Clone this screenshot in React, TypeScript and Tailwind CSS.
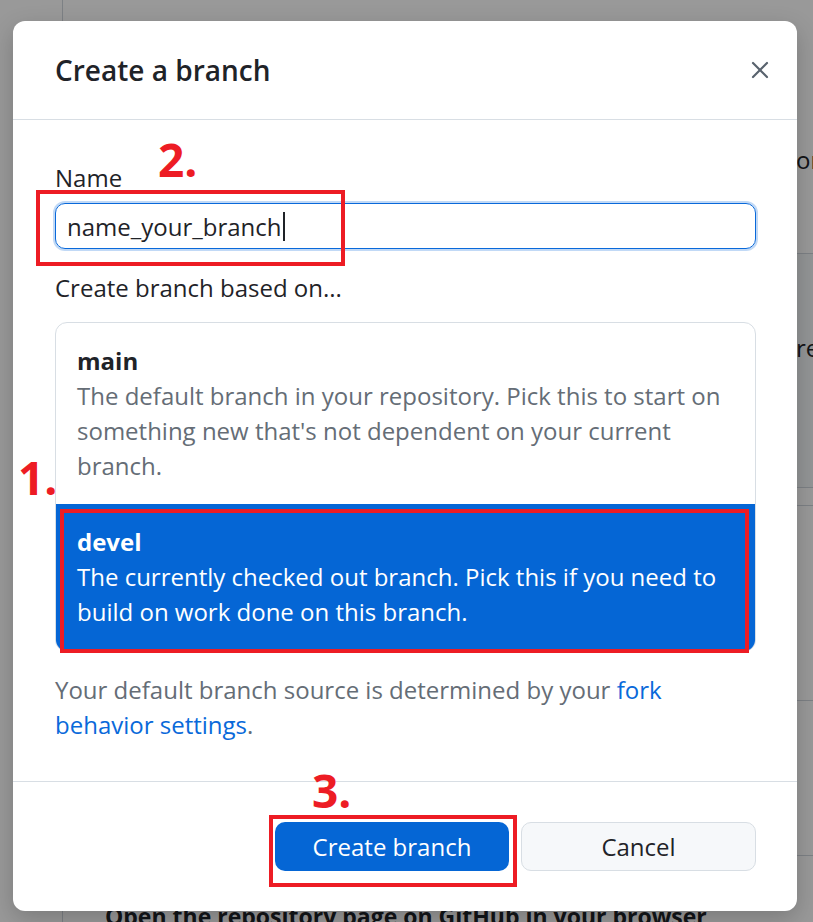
import React from 'react';

/**
 * "Create a branch" dialog over a dimmed repository page,
 * with the red step annotations (1. 2. 3.) drawn on top.
 */

const CloseIcon: React.FC = () => (
  <svg width="18" height="18" viewBox="0 0 18 18" fill="none" stroke="#59636e" strokeWidth="2.2" strokeLinecap="round">
    <line x1="2" y1="2" x2="16" y2="16" />
    <line x1="16" y1="2" x2="2" y2="16" />
  </svg>
);

// The page that sits behind the overlay (only its edges show)
const BackgroundPage: React.FC = () => (
  <div className="flex h-full">
    <div className="w-[62px] shrink-0" />
    <div className="grid flex-1 grid-cols-[733px_1fr] border-l border-[#d0d7de]">
      <div className="pl-[42px] pt-[901px]">
        <h2 className="whitespace-nowrap text-[23px] font-bold leading-[30px] text-[#1f2328]">
          Open the repository page on GitHub in your browser
        </h2>
      </div>
      <div className="flex flex-col text-[24px] text-[#1f2328]">
        <div className="h-[253px] whitespace-nowrap pt-[142px] leading-[35px]">omm</div>
        <div className="h-[235px] whitespace-nowrap border-y border-[#d0d7de] bg-[#f6f8fa] pt-[76px] leading-[35px]">
          req
        </div>
        <div className="h-[17px]" />
        <div className="h-[195px] border-t border-[#d0d7de]" />
        <div className="h-[155px] border-t border-[#d0d7de]" />
        <div className="flex-1 border-t border-[#d0d7de]" />
      </div>
    </div>
  </div>
);

const Annotations: React.FC = () => (
  <>
    <div className="absolute left-[36px] top-[190px] h-[76px] w-[309px] border-4 border-[#ed1c24]" />
    <div className="absolute left-[60px] top-[509px] h-[144px] w-[689px] border-4 border-[#ed1c24]" />
    <div className="absolute left-[269px] top-[815px] h-[72px] w-[248px] border-4 border-[#ed1c24]" />
    <span className="absolute left-[158px] top-[136px] text-[46px] font-bold leading-none text-[#ed1c24]">2.</span>
    <span className="absolute left-[18px] top-[454px] text-[46px] font-bold leading-none text-[#ed1c24]">1.</span>
    <span className="absolute left-[312px] top-[767px] text-[46px] font-bold leading-none text-[#ed1c24]">3.</span>
  </>
);

const App: React.FC = () => {
  return (
    <div className="relative h-[922px] w-full overflow-hidden bg-white font-['Open_Sans',sans-serif]">
      <BackgroundPage />

      {/* Overlay + dialog */}
      <div className="absolute inset-0 bg-black/40 pl-[13px] pt-[21px]">
        <div className="w-[784px] overflow-hidden rounded-[12px] bg-white shadow-[0_8px_24px_rgba(0,0,0,0.2)]">
          {/* Header */}
          <div className="flex h-[99px] items-center justify-between border-b border-[#d8dee4] pl-[42px] pr-[28px]">
            <h1 className="text-[28px] font-semibold text-[#1f2328]">Create a branch</h1>
            <button className="flex h-[32px] w-[32px] items-center justify-end">
              <CloseIcon />
            </button>
          </div>

          {/* Body */}
          <div className="border-b border-[#d8dee4] pb-[39px] pl-[42px] pr-[41px] pt-[40px] text-[24px] leading-[35px]">
            <label className="block text-[#1f2328]">Name</label>
            <div className="mt-[8px] flex h-[46px] items-center rounded-[10px] border-[1.5px] border-[#0969da] pl-[11px] text-[#1f2328] shadow-[0_0_0_2px_rgba(9,105,218,0.25)]">
              <span>name_your_branch</span>
              <span className="ml-[1px] inline-block h-[29px] w-[2px] bg-[#1f2328]" />
            </div>

            <p className="mt-[21px] text-[#1f2328]">Create branch based on...</p>

            <div className="mt-[17px] overflow-hidden rounded-[12px] border border-[#d8dee4]">
              <div className="px-[21px] pb-[21px] pt-[20px]">
                <div className="font-bold text-[#1f2328]">main</div>
                <div className="text-[#656d76]">
                  The default branch in your repository. Pick this to start on something new that's not dependent on
                  your current branch.
                </div>
              </div>
              <div className="bg-[#0566d5] px-[21px] pb-[22px] pt-[20px] text-white">
                <div className="font-bold">devel</div>
                <div>The currently checked out branch. Pick this if you need to build on work done on this branch.</div>
              </div>
            </div>

            <p className="mt-[20px] text-[#656d76]">
              Your default branch source is determined by your{' '}
              <a href="#" className="text-[#0969da]">
                fork behavior settings
              </a>
              .
            </p>
          </div>

          {/* Footer */}
          <div className="flex justify-end gap-[12px] pb-[40px] pr-[41px] pt-[40px] text-[24px]">
            <button className="h-[49px] w-[234px] rounded-[10px] bg-[#0566d5] text-white">Create branch</button>
            <button className="h-[49px] w-[235px] rounded-[10px] border border-[#d8dee4] bg-[#f6f8fa] text-[#1f2328]">
              Cancel
            </button>
          </div>
        </div>
      </div>

      <Annotations />
    </div>
  );
};

export default App;
